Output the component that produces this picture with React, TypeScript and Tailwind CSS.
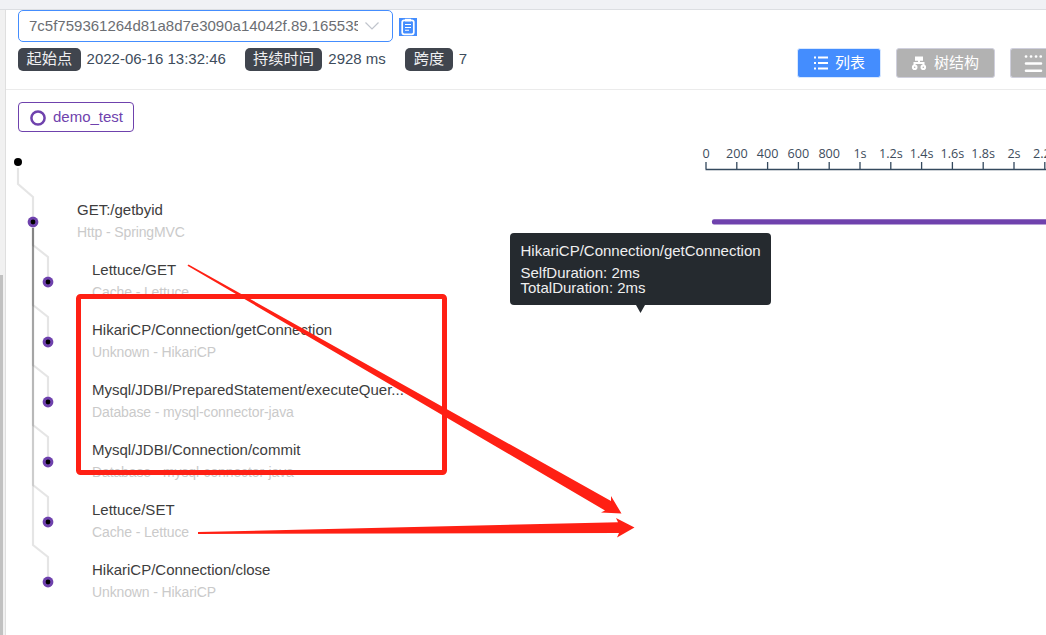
import React from "react";

type Span = { name: string; meta: string; root?: boolean };

const spans: Span[] = [
  { name: "GET:/getbyid", meta: "Http - SpringMVC", root: true },
  { name: "Lettuce/GET", meta: "Cache - Lettuce" },
  { name: "HikariCP/Connection/getConnection", meta: "Unknown - HikariCP" },
  { name: "Mysql/JDBI/PreparedStatement/executeQuer...", meta: "Database - mysql-connector-java" },
  { name: "Mysql/JDBI/Connection/commit", meta: "Database - mysql-connector-java" },
  { name: "Lettuce/SET", meta: "Cache - Lettuce" },
  { name: "HikariCP/Connection/close", meta: "Unknown - HikariCP" },
];

const ticks = ["0", "200", "400", "600", "800", "1s", "1.2s", "1.4s", "1.6s", "1.8s", "2s", "2.2s"];

function Tag({ children }: { children: React.ReactNode }) {
  return (
    <span className="flex h-[23px] items-center rounded-[5px] bg-[#40454e] px-[8.5px] pb-px text-[15.2px] leading-none text-[#efeff1]">
      {children}
    </span>
  );
}

function TraceHeader() {
  return (
    <header className="h-[80px] shrink-0 border-b border-[#ebebeb] pl-3">
      <div className="flex h-8 items-center">
        <div className="flex h-8 w-[375px] items-center rounded-[5px] border-[1.5px] border-[#448dfe] pl-2.5 pr-3">
          <span className="w-[330px] overflow-hidden whitespace-nowrap text-[15px] leading-5 text-[#6b6e73]">
            7c5f759361264d81a8d7e3090a14042f.89.16553575
          </span>
          <svg className="ml-1.5 h-4 w-4 shrink-0" viewBox="0 0 16 16" fill="none" stroke="#c0c4cc" strokeWidth="1.2">
            <path d="M1.5 4.5 8 11 14.5 4.5" />
          </svg>
        </div>
        <svg className="ml-1.5 mt-px h-[18px] w-[18px]" viewBox="0 0 18 18">
          <path fill="#448dfe" d="M0 0h18v18H0z" />
          <rect x="3.2" y="2.3" width="11.6" height="14" rx="2" fill="none" stroke="#fff" strokeWidth="1.7" />
          <path d="M6 0.8h6v2.6H6z" fill="#fff" />
          <path d="M6 6.5h6M6 9.5h6M6 12.2h4" stroke="#fff" strokeWidth="1.1" />
        </svg>
      </div>
      <div className="flex">
        <div className="mt-1.5 flex h-[23px] items-center whitespace-nowrap text-[15px] text-[#3d4c5c]">
          <Tag>起始点</Tag>
          <span className="ml-1.5 w-[158px]">2022-06-16 13:32:46</span>
          <Tag>持续时间</Tag>
          <span className="ml-1.5 w-[77px]">2928 ms</span>
          <Tag>跨度</Tag>
          <span className="ml-1.5">7</span>
        </div>
        <div className="ml-auto flex items-start gap-[15px] pt-1.5 text-[15px] leading-7 text-white">
          <button className="flex h-[30px] w-[84px] items-center rounded-[3px] border border-[#d8e8ff] bg-[#448dfe] pl-[15px]">
            <svg className="h-4 w-4" viewBox="0 0 16 16" stroke="#fff" strokeWidth="1.8">
              <path d="M5 2.5h10M5 8h10M5 13.5h10M1 2.5h2M1 8h2M1 13.5h2" />
            </svg>
            <span className="ml-1.5">列表</span>
          </button>
          <button className="flex h-[30px] w-[99px] items-center rounded-[3px] border border-[#cfcfdc] bg-[#b2b2b2] pl-[15px]">
            <svg className="-ml-px h-4 w-4" viewBox="0 0 16 16" fill="none" stroke="#fff" strokeWidth="2">
              <path fill="#fff" stroke="none" d="M4 1.5h8v4.3H4z" />
              <path d="M8 5v3M3.5 11V8h9v3" />
              <circle cx="3.7" cy="12.2" r="1.8" />
              <circle cx="12.3" cy="12.2" r="1.8" />
            </svg>
            <span className="ml-[7px]">树结构</span>
          </button>
          <button className="flex h-[30px] w-9 items-center rounded-l-[3px] border border-r-0 border-[#cfcfdc] bg-[#b2b2b2] pl-[13px]">
            <svg className="mt-px h-5 w-5" viewBox="0 0 20 20" stroke="#fff" strokeWidth="2.6" strokeLinecap="round">
              <path d="M2 9.5h15M2 16.7h15" />
              <path strokeWidth="2.7" d="M2 2.5h.1M7 2.5h.1M12 2.5h.1M16.7 2.5h.1" />
            </svg>
          </button>
        </div>
      </div>
    </header>
  );
}

function TreeLines() {
  return (
    <svg className="h-[490px] w-[60px] shrink-0" viewBox="6 145 60 490">
      <g fill="none" stroke="#000" strokeOpacity="0.1" strokeWidth="2.2">
        <path d="M18 168V184L33 197V216" />
        {spans.slice(1).map((span, i) => (
          <path key={i} d={`M33 228V${245 + i * 60}L48 ${257 + i * 60}V${276 + i * 60}`} />
        ))}
      </g>
      <circle cx="18" cy="162" r="4" />
      {spans.map((span, i) => (
        <g key={i}>
          <circle cx={span.root ? 33 : 48} cy={222 + i * 60} r="5.4" fill="#6f42ad" />
          <circle cx={span.root ? 33 : 48} cy={222 + i * 60} r="2.4" />
        </g>
      ))}
    </svg>
  );
}

function TimeAxis() {
  return (
    <svg className="h-[90px] w-[346px]" viewBox="700 145 346 90">
      <g
        className="text-[12.6px]"
        fontFamily="'Open Sans', 'Noto Sans', sans-serif"
        fill="#3d4c5c"
        textAnchor="middle"
      >
        {ticks.map((label, i) => (
          <text key={label} x={706 + i * 30.8} y="158">
            {label}
          </text>
        ))}
      </g>
      <path
        d={"M705.5 169.5H1046" + ticks.map((_, i) => `M${706 + i * 30.8} 162V169`).join("")}
        fill="none"
        stroke="#34495e"
        strokeWidth="1.3"
      />
      <rect x="712" y="219.3" width="360" height="5.2" rx="2" fill="#6f42ad" />
    </svg>
  );
}

function Tooltip() {
  return (
    <div className="absolute left-[510px] top-[233px] h-[72px] w-[261px] rounded bg-[#252a2f] pl-[10.5px] pt-[10px] text-[15px] leading-[15px] text-[#efefef]">
      <div className="mb-[7px] whitespace-nowrap">HikariCP/Connection/getConnection</div>
      <div>SelfDuration: 2ms</div>
      <div>TotalDuration: 2ms</div>
      <svg className="absolute left-[126px] top-[72px] h-2 w-[9px]" viewBox="0 0 9 8">
        <path d="M0 0h9L4.5 8z" fill="#252a2f" />
      </svg>
    </div>
  );
}

function Annotations() {
  return (
    <svg className="pointer-events-none absolute inset-0 h-[635px] w-[1046px]" viewBox="0 0 1046 635" fill="#ff2014">
      <rect x="78.5" y="296.5" width="366" height="176" rx="2" fill="none" stroke="#ff2014" strokeWidth="5" />
      <path d="M188.5 264.5 611 501 611 496 621.5 513.5 601 512.5 605 510.5 187.5 265.7Z" />
      <path d="M198 532 618 522.3 616 518 634.5 527.5 617 537.5 619 533 198 534Z" />
    </svg>
  );
}

export default function App() {
  return (
    <div className="relative flex h-[635px] w-[1046px] flex-col overflow-hidden bg-white font-['Liberation_Sans','Noto_Sans_CJK_SC',sans-serif]">
      <div className="h-[10px] shrink-0 border-b border-[#dcdee2] bg-[#f0f1f5]" />
      <div className="flex min-h-0 flex-1">
        <aside className="flex w-1.5 shrink-0 border-r border-[#dfdfdf] bg-[#f1f1f1] pt-[265px]">
          <div className="w-[3px] bg-[#c1c1c1]" />
        </aside>
        <main className="flex min-w-0 flex-1 flex-col">
          <TraceHeader />
          <div className="flex h-[55px] shrink-0 items-start pl-3 pt-3">
            <div className="flex h-[30px] w-[116px] items-center rounded border border-[#6f42ad] pl-[11px] text-[15px] text-[#6f42ad]">
              <svg className="mt-0.5 h-4 w-4" viewBox="0 0 16 16" fill="none" stroke="#6f42ad" strokeWidth="2.5">
                <circle cx="8" cy="8" r="6.6" />
              </svg>
              <span className="ml-[7px]">demo_test</span>
            </div>
          </div>
          <div className="flex">
            <TreeLines />
            <ul className="w-[634px] shrink-0 pt-[55px]">
              {spans.map((span, i) => (
                <li key={i} className={span.root ? "h-[60px] pl-[11px]" : "h-[60px] pl-[26px]"}>
                  <div className="text-[15px] leading-5 text-[#3d3d3d]">{span.name}</div>
                  <div className="mt-px text-[14px] leading-[22px] tracking-[-0.12px] text-[#cacaca]">{span.meta}</div>
                </li>
              ))}
            </ul>
            <TimeAxis />
          </div>
        </main>
      </div>
      <Tooltip />
      <Annotations />
    </div>
  );
}
